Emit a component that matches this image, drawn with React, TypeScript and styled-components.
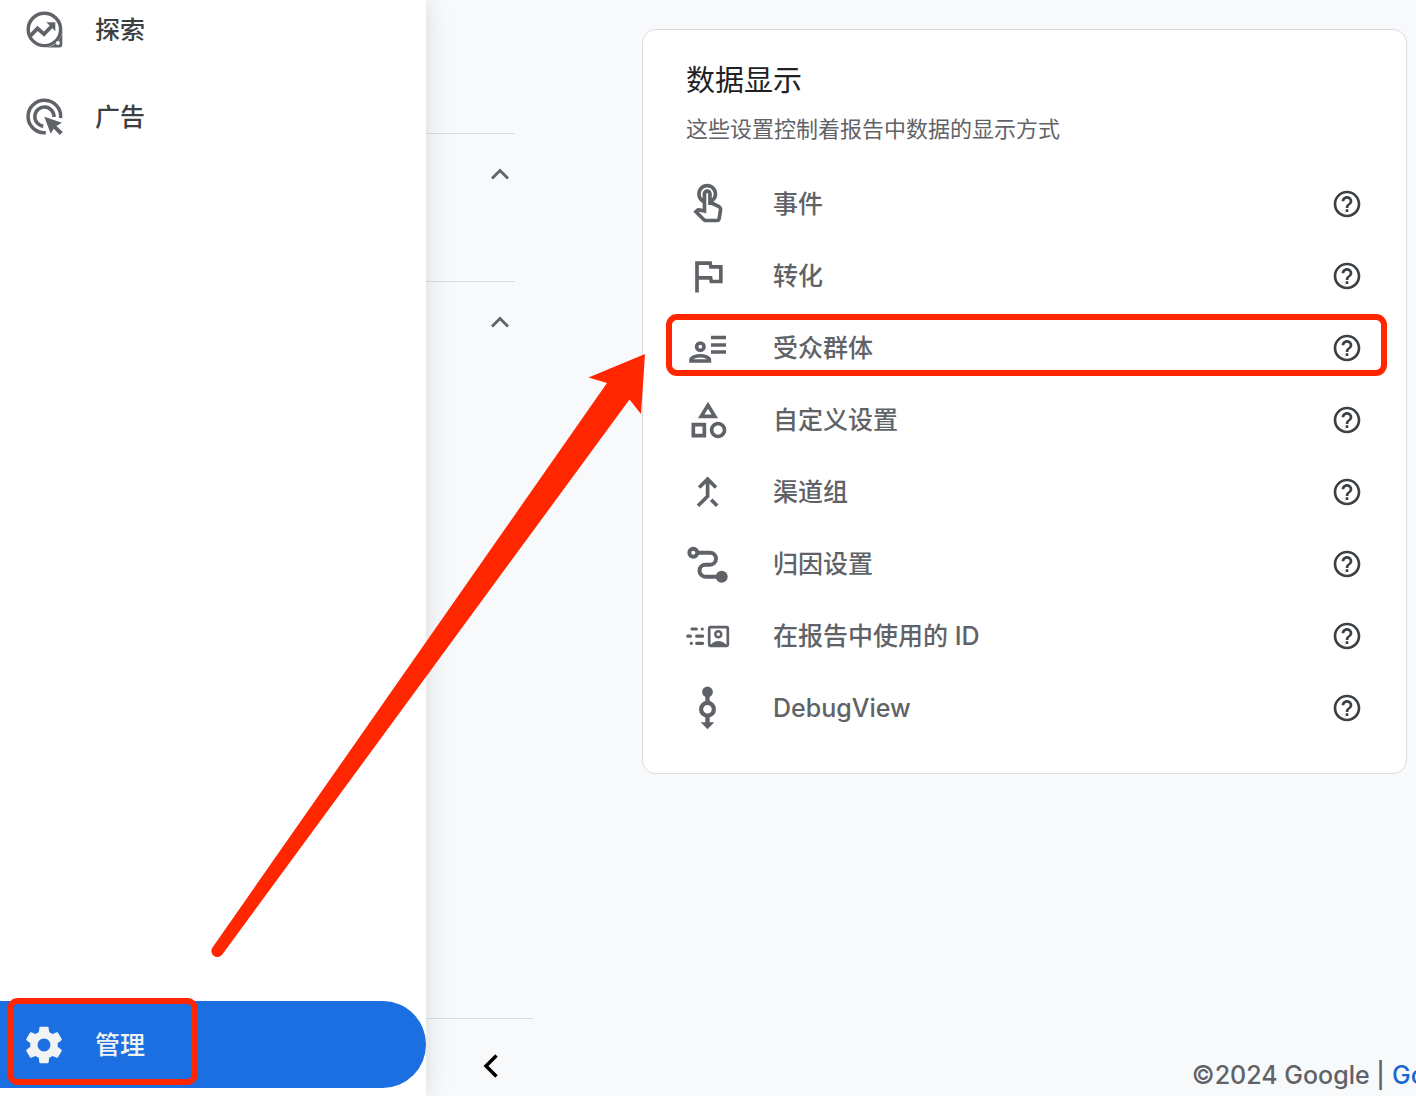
import React from "react";
import styled, { createGlobalStyle } from "styled-components";

const ink = "#5f6368";
const line = "#dadce0";
const mark = "#ff2600";

const GlobalStyle = createGlobalStyle`
  *, *::before, *::after { box-sizing: border-box; }
  body {
    margin: 0;
    background: #f8f9fb;
    color: ${ink};
    font-family: Inter, "Noto Sans CJK SC", sans-serif;
    font-size: 25px;
    line-height: 32px;
  }
  a { color: inherit; text-decoration: none; }
  button { margin: 0; padding: 0; border: 0; background: none; color: inherit; cursor: pointer; }
  svg { display: block; flex: none; }
`;

const Page = styled.div`
  position: relative;
  display: flex;
  min-height: 100vh;
  overflow: hidden;
`;

const Sidebar = styled.nav`
  z-index: 1;
  flex: 0 0 426px;
  display: flex;
  flex-direction: column;
  gap: 43px;
  padding: 8px 0;
  background: #fff;
  box-shadow: 0 0 24px rgba(0, 0, 0, 0.13);
`;

const NavLink = styled.a<{ $active?: boolean }>`
  position: relative;
  display: flex;
  align-items: center;
  gap: 29px;
  height: ${(p) => (p.$active ? 87 : 44)}px;
  margin-top: ${(p) => (p.$active ? "auto" : "0")};
  padding-left: 22px;
  border-radius: 0 44px 44px 0;
  background: ${(p) => (p.$active ? "#1b6fe0" : "transparent")};
  color: ${(p) => (p.$active ? "#f1f3f4" : ink)};
  font-weight: 500;
`;

const NavText = styled.span<{ $active?: boolean }>`
  color: ${(p) => (p.$active ? "#f1f3f4" : "#3c4043")};
`;

const NavMark = styled.span`
  position: absolute;
  left: 7px;
  top: -3px;
  width: 191px;
  height: 87px;
  border: 6px solid ${mark};
  border-radius: 11px;
`;

const SubNav = styled.aside`
  flex: 0 0 107px;
  display: flex;
  flex-direction: column;
  padding-top: 133px;
`;

const SubSection = styled.section`
  display: flex;
  justify-content: flex-end;
  align-items: flex-start;
  height: 148px;
  margin-right: 18px;
  padding: 29px 4px 0 0;
  border-top: 1px solid ${line};
`;

const SubFooter = styled.div`
  display: flex;
  justify-content: center;
  align-items: center;
  height: 78px;
  margin-top: auto;
  padding: 16px 0 0 22px;
  border-top: 1px solid ${line};
`;

const ChevronButton = styled.button<{ $dark?: boolean }>`
  color: ${(p) => (p.$dark ? "#000" : ink)};
`;

const Main = styled.main`
  flex: 1;
  min-width: 0;
  display: flex;
  flex-direction: column;
  padding-top: 29px;
`;

const Card = styled.section`
  margin: 0 9px 0 109px;
  padding: 31px 43px 29px;
  border: 1px solid ${line};
  border-radius: 14px;
  background: #fff;
`;

const Title = styled.h2`
  margin: 0;
  color: #202124;
  font-size: 29px;
  font-weight: 400;
  line-height: 40px;
`;

const Subtitle = styled.p`
  margin: 12px 0 23px;
  font-size: 22px;
`;

const List = styled.ul`
  margin: 0;
  padding: 0;
  list-style: none;
`;

const Row = styled.li`
  position: relative;
  display: flex;
  align-items: center;
  height: 72px;
`;

const RowLink = styled.a`
  flex: 1;
  display: flex;
  align-items: center;
  gap: 43px;
  font-weight: 500;
`;

const RowMark = styled.span`
  position: absolute;
  inset: 2px -24px 8px -20px;
  border: 6px solid ${mark};
  border-radius: 11px;
  pointer-events: none;
`;

const HelpButton = styled.button`
  color: #3c4043;
`;

const Footer = styled.footer`
  display: flex;
  justify-content: flex-end;
  gap: 7px;
  margin-top: auto;
  padding-bottom: 5px;
  font-weight: 500;
  white-space: nowrap;
`;

const FooterLink = styled.a`
  flex: 0 0 24px;
  overflow: hidden;
  color: #1967d2;
`;

const Arrow = styled.svg`
  position: absolute;
  z-index: 2;
  left: 0;
  top: 0;
  pointer-events: none;
`;

type Kids = { children: React.ReactNode };

const Icon24 = ({ children }: Kids) => (
  <svg width="44" height="44" viewBox="0 0 24 24" fill="currentColor" aria-hidden="true">{children}</svg>
);
const Icon44 = ({ children }: Kids) => (
  <svg width="44" height="44" viewBox="0 0 44 44" fill="none" stroke="currentColor" aria-hidden="true">{children}</svg>
);

const ExploreIcon = () => (
  <Icon44>
    <circle cx="22.4" cy="21.4" r="16.2" strokeWidth="3.4" />
    <path d="M40.3 21.4V36.6a3 3 0 0 1-3 3H22.400A18 18 0 0 0 40.300 21.400z" fill="currentColor" stroke="none" />
    <path d="M8.500 27.800l7-7.400 6.500 5.800 9-9.400" strokeWidth="3.800" />
    <path d="M24.300 14.300h9v9z" fill="currentColor" stroke="none" />
    <circle cx="35.900" cy="35" r="2" fill="#fff" stroke="none" />
  </Icon44>
);
const AdsIcon = () => (
  <Icon44>
    <path d="M38.600 23A16.300 16.300 0 1 0 23.800 37.700" strokeWidth="3.500" />
    <path d="M32 22A9.600 9.600 0 1 0 21.300 31.200" strokeWidth="3.500" />
    <path d="M22.300 21.700l17.500 6-5.400 3.400 6.400 5.800-3 3-6-6.100-3.100 4.900z" fill="currentColor" stroke="none" />
  </Icon44>
);
const GearIcon = () => (
  <Icon24>
    <path d="M19.430 12.980c.04-.32.07-.64.07-.98s-.03-.66-.07-.98l2.110-1.650c.19-.15.24-.42.12-.64l-2-3.460c-.12-.22-.39-.3-.61-.22l-2.490 1c-.52-.4-1.080-.73-1.690-.98l-.38-2.650C14.460 2.180 14.250 2 14 2h-4c-.25 0-.46.18-.49.42l-.38 2.650c-.61.25-1.170.59-1.690.98l-2.490-1c-.23-.09-.49 0-.61.22l-2 3.460c-.13.22-.07.49.12.64l2.110 1.650c-.04.32-.07.65-.07.98s.03.66.07.98l-2.110 1.650c-.19.15-.24.42-.12.64l2 3.460c.12.22.39.3.61.22l2.490-1c.52.4 1.080.73 1.690.98l.38 2.650c.03.24.24.42.49.42h4c.25 0 .46-.18.49-.42l.38-2.650c.61-.25 1.170-.59 1.690-.98l2.490 1c.23.09.49 0 .61-.22l2-3.460c.12-.22.07-.49-.12-.64l-2.110-1.650zM12 15.500c-1.930 0-3.500-1.570-3.500-3.500s1.570-3.500 3.500-3.500 3.500 1.570 3.500 3.500-1.570 3.500-3.500 3.500z" />
  </Icon24>
);
const TouchIcon = () => (
  <Icon24>
    <path d="M18.19 12.44l-3.24-1.62c1.29-1 2.12-2.56 2.12-4.32 0-3.03-2.47-5.5-5.5-5.5s-5.5 2.47-5.5 5.5c0 2.13 1.22 3.98 3 4.89v3.26c-2.15-.46-2.02-.44-2.26-.44-.53 0-1.03.21-1.41.59L4 16.22l5.09 5.09c.43.44 1.03.69 1.65.69h6.3c.98 0 1.81-.7 1.97-1.67l.8-4.71c.22-1.3-.43-2.58-1.62-3.18zm-.35 2.85l-.8 4.71h-6.3c-.09 0-.17-.04-.24-.1l-3.68-3.68 4.25.89V6.5c0-.28.22-.5.5-.5s.5.22.5.5v6h1.76l3.46 1.73c.4.2.62.63.55 1.06zM8.07 6.5c0-1.93 1.57-3.5 3.5-3.5s3.5 1.57 3.5 3.5c0 .95-.38 1.81-1 2.44V6.5c0-1.38-1.12-2.5-2.5-2.5s-2.5 1.12-2.5 2.5v2.44c-.62-.63-1-1.49-1-2.44z" />
  </Icon24>
);
const FlagIcon = () => (
  <Icon24>
    <path d="M12.36 6l.4 2H18v6h-3.36l-.4-2H7V6h5.36M14 4H5v17h2v-7h5.6l.4 2h7V6h-5.6L14 4z" />
  </Icon24>
);
const AudienceIcon = () => (
  <Icon44>
    <path d="M25 11.500h15M25 19h15M25 26h15" strokeWidth="3.300" />
    <circle cx="14.300" cy="20.700" r="3.700" strokeWidth="3.600" />
    <path d="M5 35v-1.200c0-2.400 5-4.100 9.200-4.100s9.200 1.700 9.200 4.100V35z" strokeWidth="3.600" />
  </Icon44>
);
const ShapesIcon = () => (
  <Icon24>
    <path d="M12 2l-5.5 9h11L12 2zm0 3.84L13.93 9h-3.87L12 5.84zM17.5 13c-2.49 0-4.5 2.01-4.5 4.5s2.01 4.5 4.5 4.5 4.5-2.01 4.5-4.5-2.01-4.5-4.5-4.5zm0 7c-1.38 0-2.5-1.12-2.5-2.5s1.12-2.5 2.5-2.5 2.5 1.12 2.5 2.5-1.12 2.5-2.5 2.5zM3 21.5h8v-8H3v8zm2-6h4v4H5v-4z" />
  </Icon24>
);
const MergeIcon = () => (
  <Icon44>
    <path d="M13.200 17.500l8.400-8.400 8.400 8.400M21.600 9.500V26.300L12 35.800M25.200 29.800l6 6" strokeWidth="3.700" />
  </Icon44>
);
const RouteIcon = () => (
  <Icon44>
    <circle cx="7.300" cy="10.700" r="4" strokeWidth="3.900" />
    <path d="M11 10.700h13a6 6 0 0 1 0 12h-4.500a6 6 0 0 0 0 12H31" strokeWidth="3.900" />
    <circle cx="35.700" cy="34.700" r="6" fill="currentColor" stroke="none" />
  </Icon44>
);
const IdentityIcon = () => (
  <Icon44>
    <rect x="23.200" y="13.200" width="18.600" height="18.600" rx="1" strokeWidth="2.700" />
    <circle cx="32.300" cy="20.300" r="3" strokeWidth="2.500" />
    <path d="M25 31c3.500-4.700 11.200-4.700 15 0z" fill="currentColor" strokeWidth="1" />
    <path d="M6 15h4.400M16.200 15h.1M1.800 22.200h2.600M10.700 22.200h5.900M5.300 29.300h.1M10.700 29.300h5.900" strokeWidth="3.200" strokeLinecap="round" />
  </Icon44>
);
const DebugIcon = () => (
  <Icon44>
    <circle cx="21.500" cy="6" r="5.400" fill="currentColor" stroke="none" />
    <path d="M21.500 8v9M21.500 29v9" strokeWidth="4.400" />
    <circle cx="21.500" cy="23.200" r="6.400" strokeWidth="4.200" />
    <path d="M14.700 36.300h13.600l-6.800 7z" fill="currentColor" stroke="none" />
  </Icon44>
);
const HelpIcon = () => (
  <svg width="32" height="32" viewBox="0 0 24 24" fill="currentColor" aria-hidden="true">
    <path d="M11 18h2v-2h-2v2zm1-16C6.480 2 2 6.480 2 12s4.480 10 10 10 10-4.480 10-10S17.520 2 12 2zm0 18c-4.410 0-8-3.590-8-8s3.590-8 8-8 8 3.590 8 8-3.590 8-8 8zm0-14c-2.210 0-4 1.790-4 4h2c0-1.100.9-2 2-2s2 .9 2 2c0 2-3 1.750-3 5h2c0-2.250 3-2.500 3-5 0-2.210-1.790-4-4-4z" />
  </svg>
);

const rows = [
  { label: "事件", Icon: TouchIcon },
  { label: "转化", Icon: FlagIcon },
  { label: "受众群体", Icon: AudienceIcon, marked: true },
  { label: "自定义设置", Icon: ShapesIcon },
  { label: "渠道组", Icon: MergeIcon },
  { label: "归因设置", Icon: RouteIcon },
  { label: "在报告中使用的 ID", Icon: IdentityIcon },
  { label: "DebugView", Icon: DebugIcon },
];

const Collapse = () => (
  <ChevronButton type="button" aria-label="收起">
    <svg width="22" height="22" viewBox="0 0 22 22" fill="none" stroke="currentColor" strokeWidth="2.800">
      <path d="M3 15.500l8-8 8 8" />
    </svg>
  </ChevronButton>
);

export default function App() {
  return (
    <>
      <GlobalStyle />
      <Page>
        <Sidebar>
          <NavLink href="#explore"><ExploreIcon /><NavText>探索</NavText></NavLink>
          <NavLink href="#ads"><AdsIcon /><NavText>广告</NavText></NavLink>
          <NavLink href="#admin" $active>
            <GearIcon />
            <NavText $active>管理</NavText>
            <NavMark />
          </NavLink>
        </Sidebar>
        <SubNav>
          <SubSection><Collapse /></SubSection>
          <SubSection><Collapse /></SubSection>
          <SubFooter>
            <ChevronButton type="button" $dark aria-label="返回">
              <svg width="28" height="28" viewBox="0 0 28 28" fill="none" stroke="currentColor" strokeWidth="3.500">
                <path d="M19.500 3.500L9 14l10.500 10.500" />
              </svg>
            </ChevronButton>
          </SubFooter>
        </SubNav>
        <Main>
          <Card>
            <Title>数据显示</Title>
            <Subtitle>这些设置控制着报告中数据的显示方式</Subtitle>
            <List>
              {rows.map(({ label, Icon, marked }) => (
                <Row key={label}>
                  <RowLink href="#settings"><Icon />{label}</RowLink>
                  <HelpButton type="button" aria-label={label}><HelpIcon /></HelpButton>
                  {marked && <RowMark />}
                </Row>
              ))}
            </List>
          </Card>
          <Footer>
            <span>©2024 Google |</span>
            <FooterLink href="#home">Go</FooterLink>
          </Footer>
        </Main>
        <Arrow width="660" height="970" viewBox="0 0 660 970" fill={mark} aria-hidden="true">
          <path d="M645 354L588.500 377.500 607 383 212.500 947.500a6 6 0 0 0 9.800 7L629.500 399.500 641 414z" />
        </Arrow>
      </Page>
    </>
  );
}
